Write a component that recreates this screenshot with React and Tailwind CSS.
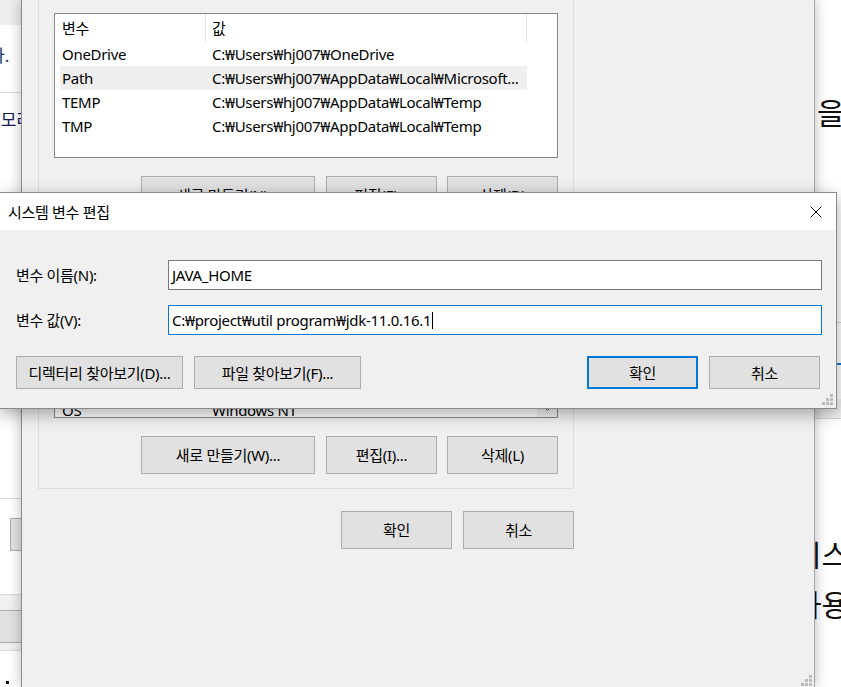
import React from "react";

// ── 공통 조각 ────────────────────────────────────────────────────────────────
function Grip({ className = "" }) {
  const dots = [[8, 0], [4, 4], [8, 4], [0, 8], [4, 8], [8, 8]];
  return (
    <svg width="11" height="11" viewBox="0 0 11 11" className={className}>
      {dots.map(([x, y]) => (
        <rect key={`${x}-${y}`} x={x} y={y} width="3" height="3" fill="#bcbcbc" />
      ))}
    </svg>
  );
}

function Btn({ children, className = "", primary = false }) {
  return (
    <div
      className={`flex items-center justify-center bg-[#e1e1e1] whitespace-nowrap ${
        primary ? "border-2 border-[#0078d7]" : "border border-[#adadad]"
      } ${className}`}
    >
      {children}
    </div>
  );
}

function Row({ name, value, selected = false }) {
  return (
    <div
      className={`ml-[5px] w-[467px] h-[24px] flex items-center whitespace-nowrap ${
        selected ? "bg-[#efefef]" : ""
      }`}
    >
      <div className="w-[150px] pl-[2px]">{name}</div>
      <div className="flex-1 pl-[2px] overflow-hidden">{value}</div>
    </div>
  );
}

const userVars = [
  { name: "OneDrive", value: "C:₩Users₩hj007₩OneDrive" },
  { name: "Path", value: "C:₩Users₩hj007₩AppData₩Local₩Microsoft...", selected: true },
  { name: "TEMP", value: "C:₩Users₩hj007₩AppData₩Local₩Temp" },
  { name: "TMP", value: "C:₩Users₩hj007₩AppData₩Local₩Temp" },
];

const sysVars = [
  { name: "ComSpec", value: "C:₩WINDOWS₩system32₩cmd.exe" },
  { name: "DriverData", value: "C:₩Windows₩System32₩Drivers₩DriverData" },
  { name: "JAVA_HOME", value: "C:₩project₩util program₩jdk-11.0.16.1" },
  { name: "NUMBER_OF_PROCESSORS", value: "8" },
  { name: "OS", value: "Windows NT" },
];

// ── 뒤쪽 창 (왼쪽) ───────────────────────────────────────────────────────────
function LeftBack() {
  return (
    <div className="absolute left-0 top-0 w-[21px] h-[687px] overflow-hidden bg-white text-[17px] leading-[22px] tracking-normal">
      <div className="h-[25px] bg-[#eeeeee]" />
      <div className="h-[67px] pt-[20px] whitespace-nowrap -ml-[11px] text-[#0a3a6a]">다.</div>
      <div className="h-[406px] border-t border-[#d9d9d9] pt-[16px] whitespace-nowrap -ml-[15px] text-[#1a1a5a]">
        메모리
      </div>
      <div className="h-[96px] border-t border-[#d9d9d9] pt-[19px]">
        <div className="ml-[10px] w-[20px] h-[33px] bg-[#e1e1e1] border border-[#adadad]" />
      </div>
      <div className="h-[16px] border-t border-[#dadada] bg-[#f0f0f0]" />
      <div className="h-[33px] border-y border-[#acacac] bg-[#e1e1e1]" />
      <div className="h-[8px] border-b border-[#dadada] bg-[#f0f0f0]" />
      <div className="pt-[30px] pl-[6px]">
        <div className="w-[3px] h-[3px] bg-black" />
      </div>
    </div>
  );
}

// ── 뒤쪽 창 (오른쪽) ─────────────────────────────────────────────────────────
function RightBack() {
  return (
    <div className="absolute left-[790px] top-0 w-[51px] h-[687px] overflow-hidden bg-white text-[30px] leading-[40px] tracking-normal text-[#111]">
      <div className="h-[93px]" />
      <div className="pl-[27px] whitespace-nowrap">을</div>
      <div className="h-[133px]" />
      <div className="h-[57px] border-b border-[#d0d0d0]" />
      <div className="h-[40px]" />
      <div className="h-[2px] bg-[#0078d7]" />
      <div className="h-[34px]" />
      <div className="h-[20px] bg-[#f0f0f0] border-b border-[#d6d6d6]" />
      <div className="h-[116px]" />
      <div className="pl-[4px] whitespace-nowrap">시스</div>
      <div className="h-[10px]" />
      <div className="pl-[4px] whitespace-nowrap">사용</div>
    </div>
  );
}

// ── 환경 변수 창 ─────────────────────────────────────────────────────────────
function EnvWindow() {
  return (
    <div className="absolute left-[21px] top-0 w-[794px] h-[687px] bg-[#f0f0f0] border-l border-r border-l-[#8c8c8c] border-r-[#a5a5a5] shadow-[0_0_12px_rgba(0,0,0,0.28)]">
      <div className="ml-[16px] w-[536px] border-x border-b border-[#dcdcdc] px-[15px] pt-[13px] pb-[14px]">
        {/* 사용자 변수 */}
        <div className="h-[145px] bg-white border border-[#828790] overflow-hidden">
          <div className="ml-[5px] w-[467px] h-[28px] flex border-r border-[#e5e5e5]">
            <div className="w-[146px] pl-[2px] flex items-center border-r border-[#e5e5e5]">변수</div>
            <div className="pl-[6px] flex items-center">값</div>
          </div>
          {userVars.map((v) => (
            <Row key={v.name} {...v} />
          ))}
        </div>

        <div className="mt-[18px] h-[38px] flex justify-end gap-[10px]">
          <Btn className="w-[174px] mr-px">새로 만들기(N)...</Btn>
          <Btn className="w-[111px]">편집(E)...</Btn>
          <Btn className="w-[111px]">삭제(D)</Btn>
        </div>

        {/* 시스템 변수 */}
        <div className="mt-[26px] h-[178px] bg-white border border-[#828790] flex overflow-hidden">
          <div className="flex-1 flex flex-col justify-end overflow-hidden">
            <div className="-mb-[5px]">
              {sysVars.map((v) => (
                <Row key={v.name} {...v} />
              ))}
            </div>
          </div>
          <div className="w-[20px] bg-[#f0f0f0] flex flex-col justify-end">
            <div className="h-[17px] flex items-center justify-center">
              <svg width="7" height="4" viewBox="0 0 7 4">
                <path d="M0.5 0.5 L3.5 3.5 L6.5 0.5" stroke="#606060" fill="none" />
              </svg>
            </div>
          </div>
        </div>

        <div className="mt-[18px] h-[38px] flex justify-end gap-[10px]">
          <Btn className="w-[174px] mr-px">새로 만들기(W)...</Btn>
          <Btn className="w-[111px]">편집(I)...</Btn>
          <Btn className="w-[111px]">삭제(L)</Btn>
        </div>
      </div>

      <div className="ml-[16px] w-[536px] mt-[22px] h-[38px] flex justify-end gap-[11px]">
        <Btn className="w-[111px]">확인</Btn>
        <Btn className="w-[111px]">취소</Btn>
      </div>

      <Grip className="absolute right-[2px] bottom-[1px]" />
    </div>
  );
}

// ── 시스템 변수 편집 대화 상자 ───────────────────────────────────────────────
function EditDialog() {
  return (
    <div className="absolute left-[-1px] top-[192px] w-[838px] h-[217px] border border-[#8a8a8a] bg-[#f0f0f0] shadow-[0_5px_16px_rgba(0,0,0,0.32)] flex flex-col">
      <div className="h-[37px] bg-white flex items-center justify-between pl-[8px] pr-[14px]">
        <span>시스템 변수 편집</span>
        <svg width="12" height="12" viewBox="0 0 12 12">
          <path d="M0.5 0.5 L11.5 11.5 M11.5 0.5 L0.5 11.5" stroke="#111" strokeWidth="1" />
        </svg>
      </div>

      <div className="flex-1 pt-[30px] pl-[16px] pr-[14px]">
        <div className="h-[30px] flex items-center">
          <div className="w-[152px]">변수 이름(N):</div>
          <div className="flex-1 h-[30px] bg-white border border-[#7a7a7a] pl-[3px] flex items-center">
            JAVA_HOME
          </div>
        </div>
        <div className="mt-[15px] h-[30px] flex items-center">
          <div className="w-[152px]">변수 값(V):</div>
          <div className="flex-1 h-[30px] bg-white border border-[#0078d7] pl-[3px] flex items-center whitespace-nowrap">
            C:₩project₩util program₩jdk-11.0.16.1
            <span className="ml-px w-px h-[17px] bg-black" />
          </div>
        </div>
        <div className="mt-[21px] h-[33px] flex">
          <Btn className="w-[167px]">디렉터리 찾아보기(D)...</Btn>
          <Btn className="w-[167px] ml-[11px]">파일 찾아보기(F)...</Btn>
          <div className="flex-1" />
          <Btn primary className="w-[111px]">확인</Btn>
          <Btn className="w-[111px] ml-[11px] mr-[2px]">취소</Btn>
        </div>
      </div>

      <Grip className="absolute right-[3px] bottom-[3px]" />
    </div>
  );
}

// ── 페이지 ───────────────────────────────────────────────────────────────────
export default function App() {
  return (
    <div className="relative w-[841px] h-[687px] overflow-hidden bg-white text-black text-[15px] leading-[20px] tracking-[-0.3px] font-['Noto_Sans','Noto_Sans_CJK_KR',sans-serif]">
      <LeftBack />
      <RightBack />
      <EnvWindow />
      <EditDialog />
    </div>
  );
}
